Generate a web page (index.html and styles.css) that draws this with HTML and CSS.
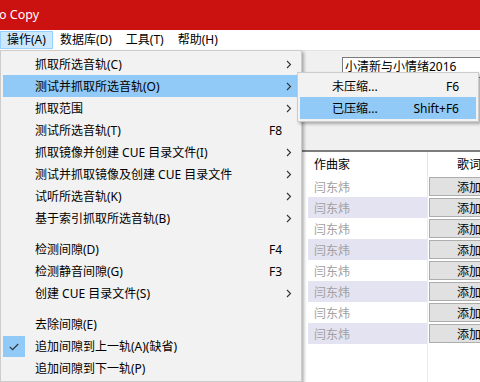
FILE: index.html
```html
<!DOCTYPE html>
<html lang="zh-CN">
<head>
<meta charset="utf-8">
<title>Exact Audio Copy</title>
<link rel="stylesheet" href="styles.css">
</head>
<body>
<div class="window">
  <div class="titlebar"><span class="title">o Copy</span></div>
  <div class="menubar">
    <span class="mb-item active">操作(A)</span>
    <span class="mb-item">数据库(D)</span>
    <span class="mb-item">工具(T)</span>
    <span class="mb-item">帮助(H)</span>
  </div>
  <div class="client">
    <div class="toolbar">
      <div class="album-input">小清新与小情绪2016</div>
    </div>
    <div class="list">
      <div class="row header"><div class="c0"></div><div class="c1">作曲家</div><div class="c2 head-center">歌词</div></div>
      <div class="row"><div class="c0"></div><div class="c1 dim">闫东炜</div><div class="c2"><span class="btn">添加</span></div></div>
      <div class="row alt"><div class="c0"></div><div class="c1 dim">闫东炜</div><div class="c2"><span class="btn">添加</span></div></div>
      <div class="row"><div class="c0"></div><div class="c1 dim">闫东炜</div><div class="c2"><span class="btn">添加</span></div></div>
      <div class="row alt"><div class="c0"></div><div class="c1 dim">闫东炜</div><div class="c2"><span class="btn">添加</span></div></div>
      <div class="row"><div class="c0"></div><div class="c1 dim">闫东炜</div><div class="c2"><span class="btn">添加</span></div></div>
      <div class="row alt"><div class="c0"></div><div class="c1 dim">闫东炜</div><div class="c2"><span class="btn">添加</span></div></div>
      <div class="row"><div class="c0"></div><div class="c1 dim">闫东炜</div><div class="c2"><span class="btn">添加</span></div></div>
      <div class="row alt"><div class="c0"></div><div class="c1 dim">闫东炜</div><div class="c2"><span class="btn">添加</span></div></div>
      <div class="row fill"><div class="c0"></div><div class="c1"></div><div class="c2"></div></div>
    </div>
  </div>

  <div class="menu main-menu">
    <div class="mi"><span></span><span>抓取所选音轨(C)</span><span></span><span class="arr"><svg width="6" height="9" viewBox="0 0 6 9"><path d="M1 1 L4.5 4.5 L1 8" fill="none" stroke="#333" stroke-width="1.1"/></svg></span></div>
    <div class="mi hl"><span></span><span>测试并抓取所选音轨(O)</span><span></span><span class="arr"><svg width="6" height="9" viewBox="0 0 6 9"><path d="M1 1 L4.5 4.5 L1 8" fill="none" stroke="#333" stroke-width="1.1"/></svg></span></div>
    <div class="mi"><span></span><span>抓取范围</span><span></span><span class="arr"><svg width="6" height="9" viewBox="0 0 6 9"><path d="M1 1 L4.5 4.5 L1 8" fill="none" stroke="#333" stroke-width="1.1"/></svg></span></div>
    <div class="mi"><span></span><span>测试所选音轨(T)</span><span class="key">F8</span><span></span></div>
    <div class="mi"><span></span><span>抓取镜像并创建 CUE 目录文件(I)</span><span></span><span class="arr"><svg width="6" height="9" viewBox="0 0 6 9"><path d="M1 1 L4.5 4.5 L1 8" fill="none" stroke="#333" stroke-width="1.1"/></svg></span></div>
    <div class="mi"><span></span><span>测试并抓取镜像及创建 CUE 目录文件</span><span></span><span class="arr"><svg width="6" height="9" viewBox="0 0 6 9"><path d="M1 1 L4.5 4.5 L1 8" fill="none" stroke="#333" stroke-width="1.1"/></svg></span></div>
    <div class="mi"><span></span><span>试听所选音轨(K)</span><span></span><span class="arr"><svg width="6" height="9" viewBox="0 0 6 9"><path d="M1 1 L4.5 4.5 L1 8" fill="none" stroke="#333" stroke-width="1.1"/></svg></span></div>
    <div class="mi"><span></span><span>基于索引抓取所选音轨(B)</span><span></span><span class="arr"><svg width="6" height="9" viewBox="0 0 6 9"><path d="M1 1 L4.5 4.5 L1 8" fill="none" stroke="#333" stroke-width="1.1"/></svg></span></div>
    <div class="sep"></div>
    <div class="mi"><span></span><span>检测间隙(D)</span><span class="key">F4</span><span></span></div>
    <div class="mi"><span></span><span>检测静音间隙(G)</span><span class="key">F3</span><span></span></div>
    <div class="mi"><span></span><span>创建 CUE 目录文件(S)</span><span></span><span class="arr"><svg width="6" height="9" viewBox="0 0 6 9"><path d="M1 1 L4.5 4.5 L1 8" fill="none" stroke="#333" stroke-width="1.1"/></svg></span></div>
    <div class="sep"></div>
    <div class="mi"><span></span><span>去除间隙(E)</span><span></span><span></span></div>
    <div class="mi"><span class="check"><svg width="10" height="8" viewBox="0 0 10 8"><path d="M0.8 3.8 L3.6 6.6 L9.2 1" fill="none" stroke="#333" stroke-width="1.2"/></svg></span><span>追加间隙到上一轨(A)(缺省)</span><span></span><span></span></div>
    <div class="mi"><span></span><span>追加间隙到下一轨(P)</span><span></span><span></span></div>
  </div>

  <div class="menu sub-menu">
    <div class="mi"><span></span><span>未压缩...</span><span class="key">F6</span><span></span></div>
    <div class="mi hl"><span></span><span>已压缩...</span><span class="key">Shift+F6</span><span></span></div>
  </div>
</div>
</body>
</html>
```

FILE: styles.css
```css
* { box-sizing: border-box; }
html, body { margin: 0; padding: 0; }
body {
  width: 480px;
  height: 382px;
  overflow: hidden;
  background: #f0f0f0;
  font-family: "Noto Sans", "Noto Sans CJK SC", sans-serif;
  font-size: 12px;
  color: #000;
}
.window {
  position: relative;
  width: 480px;
  height: 382px;
  display: flex;
  flex-direction: column;
  overflow: hidden;
}
.titlebar {
  flex: none;
  height: 30px;
  background: #cc1111;
  color: #fff;
  display: flex;
  align-items: center;
  padding-bottom: 1px;
}
.title { font-size: 12.5px; margin-left: -1px; }

.menubar {
  flex: none;
  height: 20px;
  background: #fff;
  display: flex;
  align-items: flex-start;
  padding-top: 1px;
}
.mb-item {
  height: 18px;
  line-height: 16px;
  padding: 0 6px;
  border: 1px solid transparent;
  white-space: nowrap;
}
.mb-item.active { background: #cce8ff; border-color: #99d1ff; }

.client { flex: 1; display: flex; flex-direction: column; min-height: 0; }
.toolbar {
  flex: none;
  height: 100px;
  padding: 6px 0 0 342px;
  border-top: 1px solid #e3e3e3;
}
.album-input {
  width: 160px;
  height: 21px;
  background: #fff;
  border: 1px solid #7a7a7a;
  padding: 0 2px;
  line-height: 18px;
  white-space: nowrap;
}

.list {
  flex: 1;
  display: flex;
  flex-direction: column;
  background: #fff;
  border-top: 2px solid #7d7d7d;
}
.row {
  display: grid;
  grid-template-columns: 308px 119px 1fr;
  height: 21px;
  flex: none;
  white-space: nowrap;
}
.row.header { height: 24px; }
.row.fill { flex: 1; }
.c1 { padding-left: 6px; display: flex; align-items: center; white-space: nowrap; overflow: hidden; }
.row.alt .c1 { background: #e3e3f1; }
.c2 { border-left: 1px solid #e6ecf3; padding: 1px 0 1px 1px; overflow: hidden; min-width: 0; }
.header .c2 { border-left-color: #e5e5e5; display: flex; align-items: center; }
.header .head-center { padding-left: 29px; }
.dim { color: #a0a0a0; }
.btn {
  display: flex;
  align-items: center;
  justify-content: center;
  width: 80px;
  height: 19px;
  background: #e1e1e1;
  border: 1px solid #adadad;
}

.menu {
  position: absolute;
  background: #f2f2f2;
  border: 1px solid #cccccc;
  padding: 2px;
  box-shadow: 2px 2px 3px rgba(0, 0, 0, 0.3);
}
.main-menu { left: 0; top: 50px; width: 302px; }
.sub-menu { left: 297px; top: 72px; width: 182px; }
.mi {
  display: grid;
  grid-template-columns: 32px 1fr auto 17px;
  align-items: center;
  height: 22px;
  white-space: nowrap;
}
.mi.hl { background: #91c9f7; }
.sep { height: 9px; }
.key { text-align: right; }
.arr { display: flex; align-items: center; padding-left: 4px; }
.arr svg { display: block; }
.check {
  width: 22px;
  height: 21px;
  margin-top: 1px;
  background: #91c9f7;
  display: flex;
  align-items: center;
  justify-content: center;
}
.check svg { display: block; }
```
